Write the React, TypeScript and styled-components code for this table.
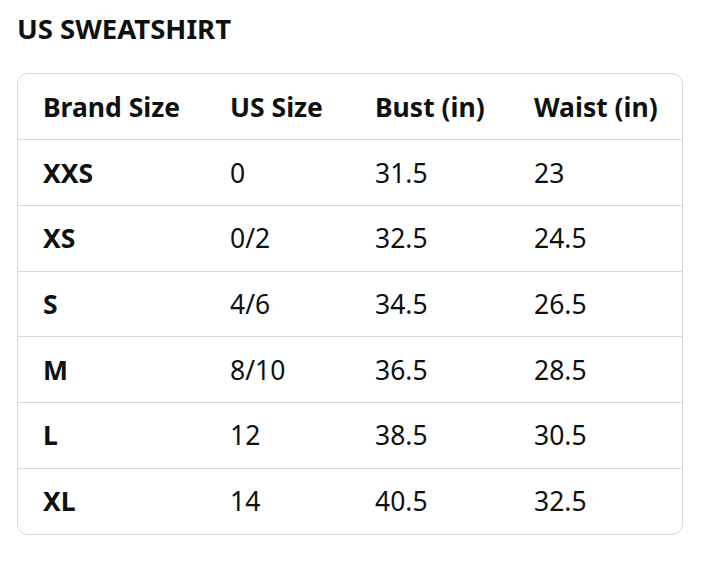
import React from "react";
import styled, { createGlobalStyle } from "styled-components";

const GlobalStyle = createGlobalStyle`
  html, body { margin: 0; padding: 0; background: #ffffff; }
  body { font-family: "Noto Sans", "Open Sans", Arial, sans-serif; color: #0f1111; }
`;

const Page = styled.div`
  width: 702px;
  height: 566px;
  box-sizing: border-box;
  padding: 11px 19px 0 17px;
`;

const Title = styled.h2`
  margin: 0 0 26px 0;
  font-size: 27.5px;
  line-height: 36px;
  font-weight: 700;
  color: #0f1111;
  letter-spacing: 0;
`;

const TableBox = styled.div`
  width: 666px;
  box-sizing: border-box;
  border: 1px solid #d5d9d9;
  border-radius: 11px;
  overflow: hidden;
`;

const Table = styled.table`
  width: 100%;
  border-collapse: collapse;
  table-layout: fixed;
`;

const Row = styled.tr<{ $first?: boolean }>`
  height: 65.7px;
  border-top: ${(p) => (p.$first ? "none" : "1px solid #d5d9d9")};
`;

const Cell = styled.td<{ $bold?: boolean }>`
  padding: 0 0 0 25px;
  font-size: 26.5px;
  line-height: 30px;
  font-weight: ${(p) => (p.$bold ? 700 : 400)};
  color: #0f1111;
  vertical-align: middle;
  white-space: nowrap;
`;

const HeadCell = styled.th`
  padding: 0 0 0 25px;
  font-size: 26.5px;
  line-height: 30px;
  font-weight: 700;
  text-align: left;
  color: #0f1111;
  vertical-align: middle;
  white-space: nowrap;
`;

const widths = [187, 145, 159, 175];
const headers = ["Brand Size", "US Size", "Bust (in)", "Waist (in)"];
const rows = [
  ["XXS", "0", "31.5", "23"],
  ["XS", "0/2", "32.5", "24.5"],
  ["S", "4/6", "34.5", "26.5"],
  ["M", "8/10", "36.5", "28.5"],
  ["L", "12", "38.5", "30.5"],
  ["XL", "14", "40.5", "32.5"],
];

export default function App() {
  return (
    <>
      <GlobalStyle />
      <Page>
        <Title>US SWEATSHIRT</Title>
        <TableBox>
          <Table>
            <colgroup>
              {widths.map((w, i) => (
                <col key={i} style={{ width: w }} />
              ))}
            </colgroup>
            <thead>
              <Row $first>
                {headers.map((h) => (
                  <HeadCell key={h}>{h}</HeadCell>
                ))}
              </Row>
            </thead>
            <tbody>
              {rows.map((r) => (
                <Row key={r[0]}>
                  {r.map((c, i) => (
                    <Cell key={i} $bold={i === 0}>
                      {c}
                    </Cell>
                  ))}
                </Row>
              ))}
            </tbody>
          </Table>
        </TableBox>
      </Page>
    </>
  );
}
